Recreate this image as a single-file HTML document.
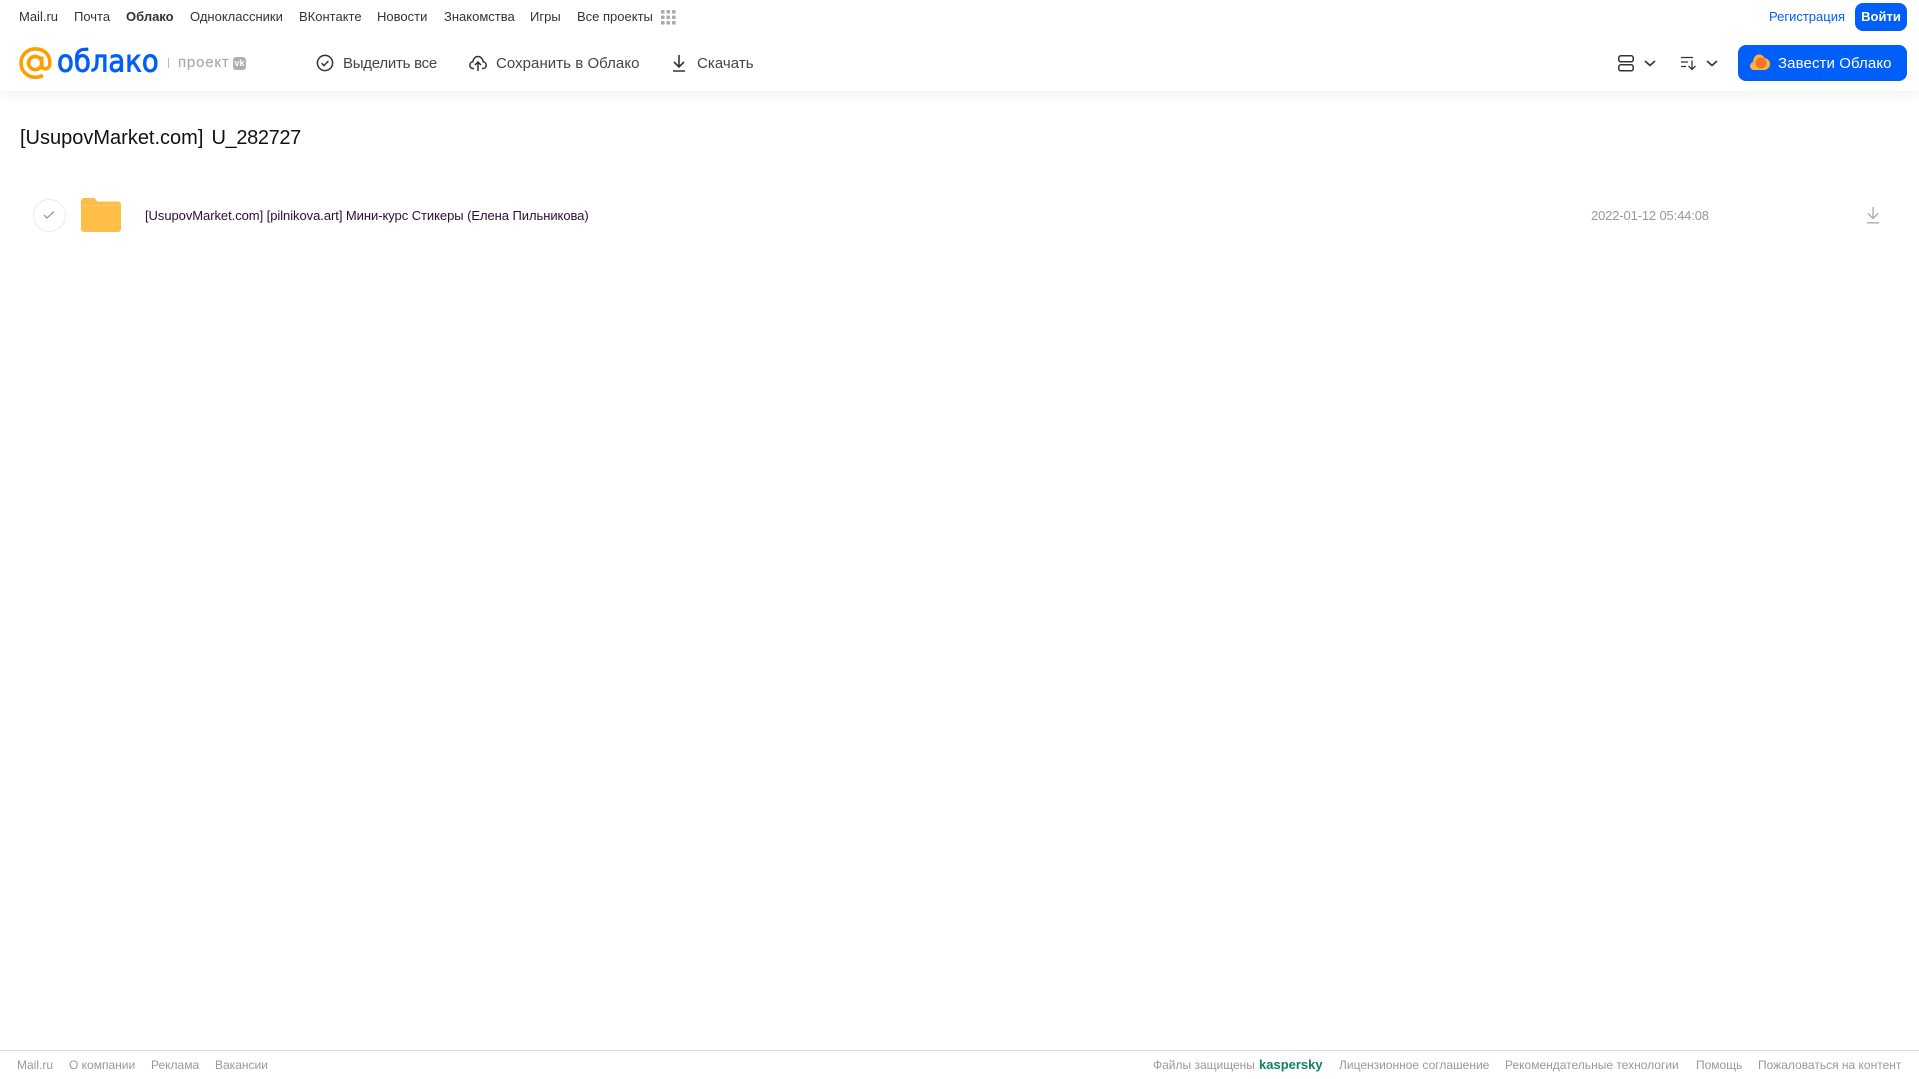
<!DOCTYPE html>
<html lang="ru"><head><meta charset="utf-8"><title>Облако</title>
<style>
html,body{margin:0;padding:0;background:#fff}
body{width:1919px;height:1079px;position:relative;overflow:hidden;font-family:"Liberation Sans",sans-serif}
.t{position:absolute;white-space:nowrap;line-height:16px}
.n{font-size:13px;color:#333;top:9px}
.b{font-size:15px;color:#444;top:56px;letter-spacing:.05px}
.f{font-size:12px;color:#999;top:1057px}
svg{position:absolute;overflow:visible}
</style></head><body>
<div style="position:absolute;left:0;top:0;width:1919px;height:91px;background:#fff;box-shadow:0 2px 12px rgba(0,0,0,.07)"></div>

<span class="t n" style="left:19px">Mail.ru</span>
<span class="t n" style="left:74px">Почта</span>
<span class="t n" style="left:126px;font-weight:bold">Облако</span>
<span class="t n" style="left:190px">Одноклассники</span>
<span class="t n" style="left:299px">ВКонтакте</span>
<span class="t n" style="left:377px">Новости</span>
<span class="t n" style="left:444px">Знакомства</span>
<span class="t n" style="left:530px">Игры</span>
<span class="t n" style="left:577px">Все проекты</span>
<svg style="left:661px;top:10px" width="15" height="15" fill="#aaa"><rect x="0" y="0" width="3.6" height="3.6" rx="1"/><rect x="5.5" y="0" width="3.6" height="3.6" rx="1"/><rect x="11" y="0" width="3.6" height="3.6" rx="1"/><rect x="0" y="5.5" width="3.6" height="3.6" rx="1"/><rect x="5.5" y="5.5" width="3.6" height="3.6" rx="1"/><rect x="11" y="5.5" width="3.6" height="3.6" rx="1"/><rect x="0" y="11" width="3.6" height="3.6" rx="1"/><rect x="5.5" y="11" width="3.6" height="3.6" rx="1"/><rect x="11" y="11" width="3.6" height="3.6" rx="1"/></svg>

<span class="t" style="left:1769px;top:9px;font-size:13px;color:#005ff9">Регистрация</span>
<div style="position:absolute;left:1855px;top:3px;width:52px;height:28px;border-radius:8px;background:#005ff9;color:#fff;font-size:13px;font-weight:bold;line-height:27px;text-align:center">Войти</div>

<svg style="left:19px;top:47px" width="33" height="33" viewBox="0 0 33 33" fill="none" stroke="#ff9e00" stroke-width="3.6"><circle cx="16.2" cy="16" r="6.6"/><path d="M22.8 9.5v8.7c0 5 7.6 5 8-1.200C31.500 7.500 25 1.900 16.200 1.900 8.300 1.900 2 8.200 2 16.100s6.300 14.200 14.200 14.200c3 0 5.500-.7 7.600-2"/></svg>
<span class="t" style="left:57px;top:45px;font-family:'DejaVu Sans',sans-serif;font-size:27.5px;line-height:36px;color:#005ff9;-webkit-text-stroke:.8px #005ff9;transform:scaleY(1.1);transform-origin:0 30px">облако</span>
<div style="position:absolute;left:168px;top:58px;width:1px;height:10px;background:#bbb"></div>
<span class="t" style="left:178px;top:55px;font-size:15px;color:#a9a9a9;letter-spacing:.8px;-webkit-text-stroke:.15px #a9a9a9">проект</span>
<div style="position:absolute;left:233px;top:57px;width:13px;height:13px;border-radius:3px;background:#b0b0b0;color:#fff;font-size:9px;font-weight:bold;line-height:13px;text-align:center">vk</div>

<svg style="left:316px;top:54px" width="18" height="18" viewBox="0 0 18 18" fill="none" stroke="#333" stroke-width="1.500"><circle cx="9" cy="9" r="7.600"/><path d="M5.600 9.200l2.400 2.400 4.400-4.600"/></svg>
<span class="t b" style="left:343px;letter-spacing:-.25px">Выделить все</span>
<svg style="left:469px;top:54px" width="18" height="18" viewBox="0 0 18 18" fill="none" stroke="#333" stroke-width="1.500"><path d="M5 14.500H4C2 14.500.8 13 .8 11.200c0-1.800 1.300-3.200 3-3.400C4.300 4.500 6.500 2.500 9 2.500s4.700 2 5.200 5.300c1.700.2 3 1.600 3 3.400 0 1.800-1.200 3.300-3.200 3.300h-1"/><path d="M9 17V8.500M6 11l3-3 3 3"/></svg>
<span class="t b" style="left:496px">Сохранить в Облако</span>
<svg style="left:672px;top:54px" width="14" height="18" viewBox="0 0 14 18" fill="none" stroke="#333" stroke-width="1.600"><path d="M7 1v11.500M2 8l5 5 5-5M1 17h12"/></svg>
<span class="t b" style="left:697px">Скачать</span>

<svg style="left:1618px;top:55px" width="16" height="17" viewBox="0 0 16 17" fill="none" stroke="#333" stroke-width="1.500"><rect x=".8" y=".8" width="14.400" height="6" rx="2"/><rect x=".8" y="9.800" width="14.400" height="6" rx="2"/></svg>
<svg style="left:1644px;top:60px" width="12" height="7" fill="none" stroke="#333" stroke-width="1.600"><path d="M1 1l5 4.500L11 1"/></svg>
<svg style="left:1681px;top:56px" width="16" height="15" fill="none" stroke="#333" stroke-width="1.300"><path d="M0 1.500h12M0 6h7M0 10.500h5M11 4.500v9M7.500 10l3.500 3.500L14.500 10"/></svg>
<svg style="left:1706px;top:60px" width="12" height="7" fill="none" stroke="#333" stroke-width="1.600"><path d="M1 1l5 4.500L11 1"/></svg>
<div style="position:absolute;left:1738px;top:45px;width:169px;height:36px;border-radius:8px;background:#005ff9"></div>
<svg style="left:1750px;top:54px" width="20" height="17" viewBox="0 0 20 17"><path d="M4 16C1.500 16 0 14 0 12c0-2 1.300-3.500 3-4C3.500 3 6 .5 9 .5c2.500 0 4.500 1.300 5.500 3.500 3 .3 5.500 2.700 5.500 6 0 3.300-2.500 6-6 6z" fill="#ffb23f"/><circle cx="11" cy="9" r="5.500" fill="#f6732a"/></svg>
<span class="t" style="left:1778px;top:56px;font-size:15px;color:#fff;letter-spacing:.1px">Завести Облако</span>

<span class="t" style="left:20px;top:126px;font-size:20px;line-height:24px;color:#111;word-spacing:2.5px">[UsupovMarket.com] <span style="letter-spacing:-.35px">U_282727</span></span>

<div style="position:absolute;left:33px;top:199px;width:31px;height:31px;border:1px solid #ebebeb;border-radius:50%"></div>
<svg style="left:43px;top:210px" width="12" height="10" fill="none" stroke="#999" stroke-width="1.300"><path d="M1 5l3 3 7-6.500"/></svg>
<svg style="left:81px;top:198px" width="40" height="34" viewBox="0 0 40 34"><path d="M0 3a3 3 0 0 1 3-3h9c2 0 3 1 4 3.500h21a3 3 0 0 1 3 3V31a3 3 0 0 1-3 3H3a3 3 0 0 1-3-3z" fill="#ffbe48"/><rect x="0" y="7" width="40" height="1" fill="#ffc964"/></svg>
<span class="t" style="left:145px;top:208px;font-size:13px;letter-spacing:-.06px;color:#2a1030">[UsupovMarket.com] [pilnikova.art] Мини-курс Стикеры (Елена Пильникова)</span>
<span class="t" style="left:1591px;top:208px;font-size:13px;letter-spacing:-.15px;color:#999">2022-01-12 05:44:08</span>
<svg style="left:1866px;top:207px" width="14" height="17" fill="none" stroke="#aaa" stroke-width="1.300"><path d="M7 0v11M2 6.500L7 11.500l5-5M1 15.800h12"/></svg>

<div style="position:absolute;left:0;top:1050px;width:1919px;height:1px;background:#ddd"></div>
<span class="t f" style="left:17px">Mail.ru</span>
<span class="t f" style="left:69px">О компании</span>
<span class="t f" style="left:151px">Реклама</span>
<span class="t f" style="left:215px">Вакансии</span>
<span class="t f" style="left:1153px">Файлы защищены</span>
<span class="t" style="left:1259px;top:1057px;font-size:13px;font-weight:bold;color:#10806a">kaspersky</span>
<span class="t f" style="left:1339px">Лицензионное соглашение</span>
<span class="t f" style="left:1505px">Рекомендательные технологии</span>
<span class="t f" style="left:1696px">Помощь</span>
<span class="t f" style="left:1758px">Пожаловаться на контент</span>
</body></html>
